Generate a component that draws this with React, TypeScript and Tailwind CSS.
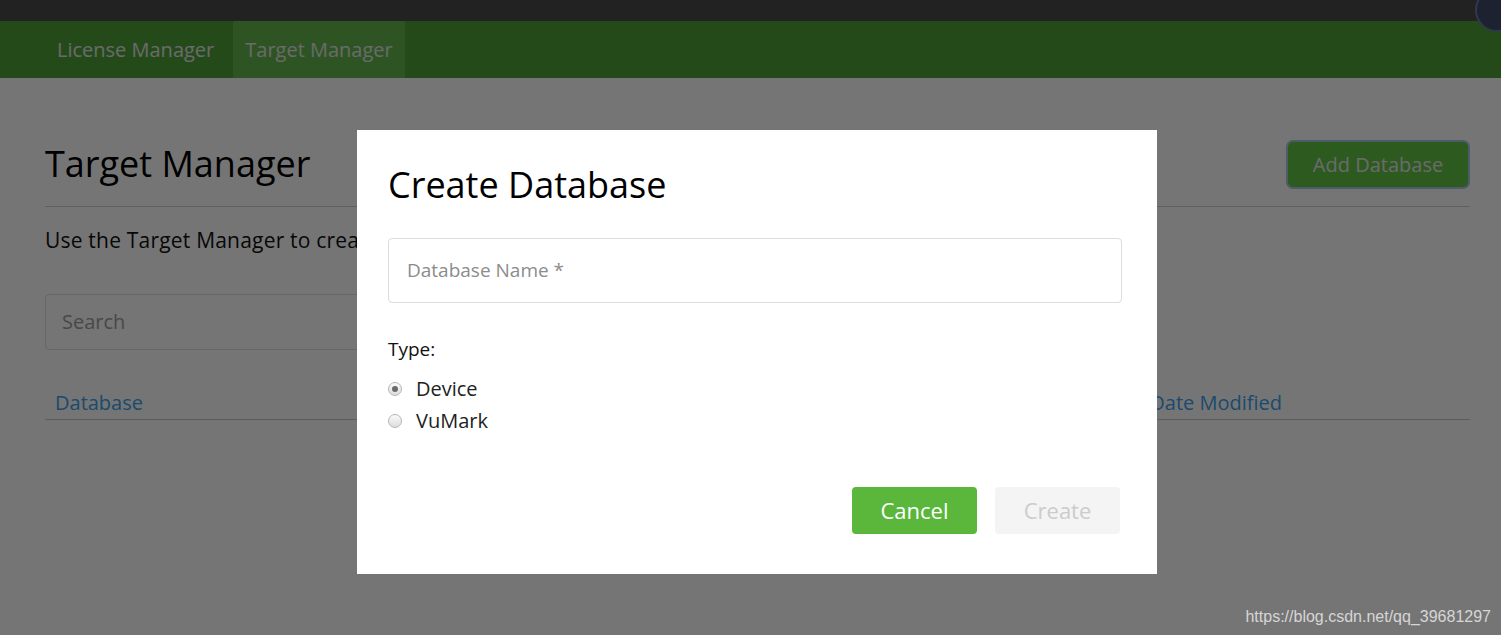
import { useState } from "react";

const font = { fontFamily: '"Open Sans", "Liberation Sans", sans-serif' };

function Radio({ checked, label }: { checked?: boolean; label: string }) {
  return (
    <label className="flex items-center h-8">
      <span className="w-[14px] h-[14px] rounded-full border border-[#b5b5b5] bg-gradient-to-b from-[#fafafa] to-[#dcdcdc] flex items-center justify-center">
        {checked && <span className="w-[6px] h-[6px] rounded-full bg-[#6a6a6a]" />}
      </span>
      <span className="ml-[14px] text-[20px] text-[#222]">{label}</span>
    </label>
  );
}

export default function App() {
  const [type, setType] = useState("device");

  return (
    <div className="relative w-[1501px] h-[635px] overflow-hidden bg-white" style={font}>
      {/* underlying page */}
      <div className="h-[21px] bg-[#4a4a4a]" />
      <nav className="h-[57px] bg-[#4fa23a] flex items-stretch pl-[45px]">
        <a className="px-3 flex items-center text-[20px] text-[#e6e6e6]">License Manager</a>
        <a className="ml-[7px] px-3 flex items-center text-[20px] text-[#e6e6e6] bg-[#64b74c] rounded-t-[3px]">Target Manager</a>
      </nav>

      <main className="pl-[45px] pr-[31px]">
        <div className="flex items-end justify-between pt-[64px] pb-[19px] border-b border-[#cfcfcf]">
          <h1 className="text-[36px] leading-none text-black pb-[5px]">Target Manager</h1>
          <button className="w-[180px] h-[45px] mr-[2px] rounded-[5px] bg-[#62c445] text-[20px] text-[#e8e8e8] ring-2 ring-[#a6c8e4]">
            Add Database
          </button>
        </div>
        <p className="mt-[18px] text-[21px] tracking-[0.2px] text-[#111]">
          Use the Target Manager to create and manage databases and targets.
        </p>
        <div className="mt-[37px] w-[700px] h-[56px] rounded-[4px] border border-[#dedede] flex items-center px-4 text-[20px] text-[#9e9e9e]">
          Search
        </div>
        <div className="mt-[38px] flex justify-between border-b border-[#c8c8c8] pb-[1px] text-[20px] text-[#3da2ee]">
          <span className="pl-[10px]">Database</span>
          <span className="pr-[188px]">Date Modified</span>
        </div>
      </main>

      {/* backdrop */}
      <div className="absolute inset-0 bg-black/[0.54]" />

      {/* dialog */}
      <div className="absolute left-[357px] top-[130px] w-[800px] h-[444px] bg-white flex flex-col px-[31px]">
        <h2 className="mt-[35px] text-[36px] leading-[40px] text-black">Create Database</h2>
        <div className="mt-[33px] h-[65px] w-[734px] rounded-[4px] border border-[#dcdcdc] flex items-center px-[18px] text-[19px] text-[#8c8c8c]">
          Database Name *
        </div>
        <div className="mt-[32px] text-[19px] font-medium text-[#111]">Type:</div>
        <div className="mt-[9px] flex flex-col" onClick={() => setType(type)}>
          <Radio checked={type === "device"} label="Device" />
          <Radio checked={type === "vumark"} label="VuMark" />
        </div>
        <div className="mt-auto mb-[40px] flex justify-end gap-[18px] pr-[6px]">
          <button className="w-[125px] h-[47px] rounded-[4px] bg-[#5ab73c] text-white text-[22px]">Cancel</button>
          <button className="w-[125px] h-[47px] rounded-[4px] bg-[#f4f4f4] text-[#cccccc] text-[22px]">Create</button>
        </div>
      </div>

      {/* extension bubble */}
      <div className="absolute -right-[18px] -top-[12px] w-[44px] h-[44px] rounded-full bg-[#1c2230] border-2 border-[#30394c]" />

      {/* watermark */}
      <div
        className="absolute right-[10px] bottom-[6px] text-[16px] text-[#d6d6d6]"
        style={{ fontFamily: '"Liberation Sans", Arial, sans-serif' }}
      >
        https://blog.csdn.net/qq_39681297
      </div>
    </div>
  );
}
